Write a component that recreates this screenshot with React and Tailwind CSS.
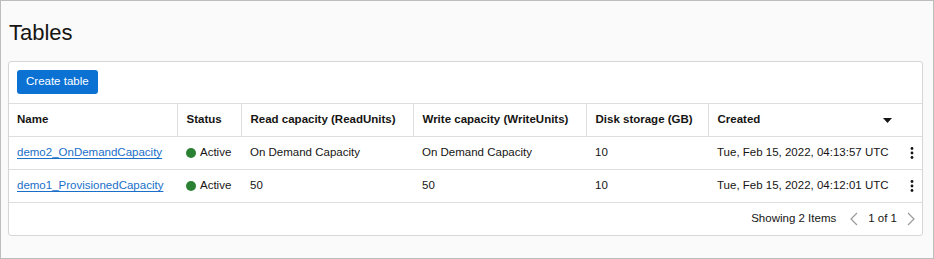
import React from "react";

const rows = [
  {
    name: "demo2_OnDemandCapacity",
    read: "On Demand Capacity",
    write: "On Demand Capacity",
    disk: "10",
    created: "Tue, Feb 15, 2022, 04:13:57 UTC",
  },
  {
    name: "demo1_ProvisionedCapacity",
    read: "50",
    write: "50",
    disk: "10",
    created: "Tue, Feb 15, 2022, 04:12:01 UTC",
  },
];

const Kebab = () => (
  <svg width="4" height="12" viewBox="0 0 4 12" className="text-[#161513]">
    <circle cx="2" cy="1.5" r="1.4" fill="currentColor" />
    <circle cx="2" cy="6" r="1.4" fill="currentColor" />
    <circle cx="2" cy="10.5" r="1.4" fill="currentColor" />
  </svg>
);

const Chevron = ({ dir }) => (
  <svg width="8" height="14" viewBox="0 0 8 14" fill="none">
    <path
      d={dir === "left" ? "M7 1 L1 7 L7 13" : "M1 1 L7 7 L1 13"}
      stroke="#9a9a9a"
      strokeWidth="1.2"
    />
  </svg>
);

export default function App() {
  return (
    <div
      className="w-[934px] h-[259px] border border-[#bdbdbd] bg-[#fafafa] text-[#161513] text-[11.5px]"
      style={{ fontFamily: '"Liberation Sans", Arial, sans-serif' }}
    >
      <h1 className="text-[22px] leading-none pl-[8px] pt-[21px] h-[60px]">Tables</h1>

      <div className="ml-[7px] w-[915px] border border-[#d6d6d6] rounded-[3px] bg-white">
        {/* Toolbar */}
        <div className="h-[41px] px-[8px] pt-[8px]">
          <button className="h-[24px] px-[9px] rounded-[3px] bg-[#0b72d4] text-white text-[11.5px]">
            Create table
          </button>
        </div>

        <table className="w-full table-fixed border-collapse">
          <colgroup>
            <col className="w-[168px]" />
            <col className="w-[64px]" />
            <col className="w-[172px]" />
            <col className="w-[173px]" />
            <col className="w-[122px]" />
            <col />
          </colgroup>
          <thead>
            <tr className="h-[33px] border-y border-[#dedede]">
              {[
                "Name",
                "Status",
                "Read capacity (ReadUnits)",
                "Write capacity (WriteUnits)",
                "Disk storage (GB)",
              ].map((h, i) => (
                <th
                  key={h}
                  className={`text-left font-bold pr-[8px] border-r border-[#dedede] ${i === 0 ? "pl-[8px]" : "pl-[9px]"}`}
                >
                  {h}
                </th>
              ))}
              <th className="text-left font-bold pl-[9px] pr-[30px]">
                <div className="flex items-center justify-between">
                  <span>Created</span>
                  <svg width="9" height="5" viewBox="0 0 9 5">
                    <path d="M0 0 H9 L4.5 5 Z" fill="#161513" />
                  </svg>
                </div>
              </th>
            </tr>
          </thead>
          <tbody>
            {rows.map((r) => (
              <tr key={r.name} className="h-[33px] border-b border-[#dedede]">
                <td className="px-[8px]">
                  <a href="#" className="text-[#1a6fc9] underline underline-offset-[2px]">
                    {r.name}
                  </a>
                </td>
                <td className="pl-[9px] pr-[4px]">
                  <span className="flex items-center gap-[4px] whitespace-nowrap">
                    <span className="w-[10px] h-[10px] rounded-full bg-[#2b8133]" />
                    Active
                  </span>
                </td>
                <td className="pl-[9px] pr-[8px]">{r.read}</td>
                <td className="pl-[9px] pr-[8px]">{r.write}</td>
                <td className="pl-[9px] pr-[8px]">{r.disk}</td>
                <td className="pl-[9px] pr-[8px]">
                  <div className="flex items-center justify-between">
                    <span>{r.created}</span>
                    <Kebab />
                  </div>
                </td>
              </tr>
            ))}
          </tbody>
        </table>

        {/* Footer */}
        <div className="h-[32px] flex items-center justify-end pr-[7px] gap-[10px]">
          <span className="mr-[4px]">Showing 2 Items</span>
          <Chevron dir="left" />
          <span>1 of 1</span>
          <Chevron dir="right" />
        </div>
      </div>
    </div>
  );
}
